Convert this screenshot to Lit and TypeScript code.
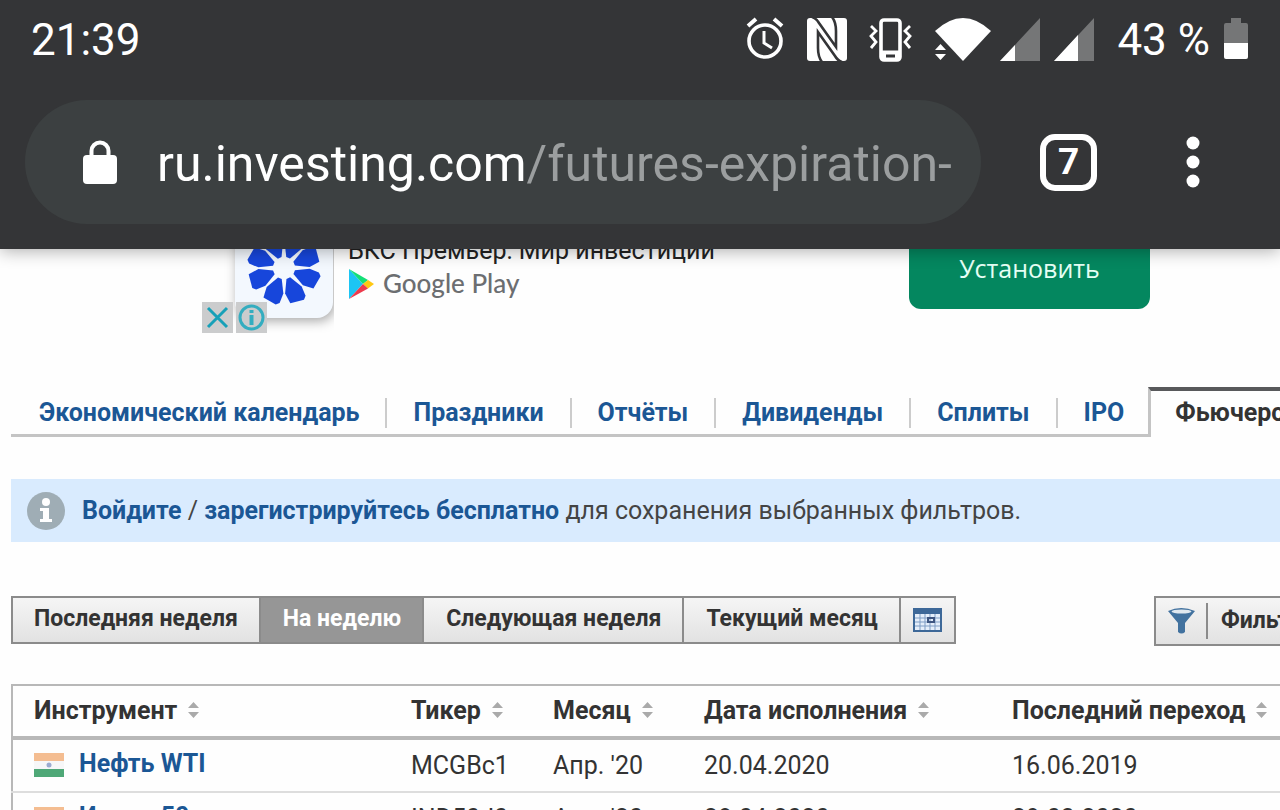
import { LitElement, html, css, svg } from "lit";
import { customElement } from "lit/decorators.js";

const tabs = ["Экономический календарь", "Праздники", "Отчёты", "Дивиденды", "Сплиты", "IPO"];
const columns = ["Инструмент", "Тикер", "Месяц", "Дата исполнения", "Последний переход"];
const rows = [
  ["Нефть WTI", "MCGBc1", "Апр. '20", "20.04.2020", "16.06.2019"],
  ["Индия 50", "IND50J0", "Апр. '20", "28.04.2020", "29.03.2020"],
];
const petals = [22, 67, 112, 157, 202, 247, 292, 337];

@customElement("app-root")
export class AppRoot extends LitElement {
  static styles = css`
    :host { display: block; height: 100vh; overflow: hidden; background: #fefefe; font-family: Roboto, sans-serif; color: #333; }
    * { box-sizing: border-box; }
    svg { display: block; flex: none; }
    a { color: #1b5795; text-decoration: none; font-weight: 700; }
    button { font: inherit; color: inherit; border: 0; margin: 0; padding: 0; background: none; cursor: pointer; }
    .chrome { position: relative; z-index: 1; height: 249px; background: #343537; color: #fff; box-shadow: 0 2px 16px rgba(0, 0, 0, 0.32); }
    .status { display: flex; align-items: center; height: 80px; padding: 0 32px 0 31px; font-size: 44px; }
    .time { flex: 1; }
    .indicators { display: flex; align-items: center; gap: 14px; }
    .percent { padding-left: 8px; }
    .toolbar { display: flex; align-items: center; height: 124px; margin-top: 20px; padding: 0 75px 0 25px; }
    .address { display: flex; align-items: center; flex: 1; height: 124px; border-radius: 62px; background: #3c4041; padding: 0 24px 0 58px; gap: 40px; min-width: 0; }
    .url { font-size: 50px; white-space: nowrap; overflow: hidden; flex: 1; line-height: 64px; padding-top: 4px; }
    .path { color: #9b9e9f; }
    .count { display: grid; place-items: center; width: 57px; height: 57px; margin-left: 59px; border: 6px solid #fff; border-radius: 15px; font-size: 37px; font-weight: 700; line-height: 40px; }
    .more { margin-left: 84px; }
    .ad { display: flex; align-items: flex-start; height: 84px; padding: 0 130px 0 202px; }
    .brand { position: relative; width: 132px; height: 84px; overflow: hidden; }
    .tile { margin: -30px 0 0 33px; width: 98px; height: 99px; border-radius: 16px; background: #f3f8fe; box-shadow: 2px 3px 12px rgba(0, 0, 0, 0.35); }
    .choices { position: absolute; left: 0; bottom: 0; display: flex; gap: 3px; }
    .choices button { width: 31px; height: 31px; background: #cbcccd; }
    .about { flex: 1; margin: -15px 0 0 14px; font-size: 25px; line-height: 33px; }
    .title { color: #222; }
    .store { display: flex; align-items: center; gap: 9px; color: #6c6e71; font-family: Lato, sans-serif; font-size: 26px; font-weight: 500; }
    .install { width: 241px; height: 79px; margin-top: -19px; padding-bottom: 3px; border-radius: 12px; background: #04875f; color: #e6fff5; font-family: "Open Sans", sans-serif; font-size: 25px; }
    .tabs { display: flex; margin-left: 11px; padding-top: 54px; font-size: 25px; white-space: nowrap; overflow: hidden; }
    .tab { display: flex; align-items: center; height: 50px; border-bottom: 3px solid #c4c4c4; padding: 4px 0 0 26px; }
    .tab:first-of-type { padding-left: 28px; }
    .tab a { padding-right: 26px; line-height: 30px; border-right: 2px solid #ccc; }
    .tab:last-of-type a { border: 0; padding-right: 24px; }
    .active { height: 50px; padding-left: 24px; border-left: 3px solid #c4c4c4; border-top: 4px solid #58595b; flex: 1; line-height: 44px; font-weight: 700; }
    .notice { display: flex; align-items: center; gap: 17px; height: 63px; margin: 42px 0 0 11px; padding-left: 16px; background: #d9ebfe; font-size: 25px; white-space: nowrap; color: #444; }
    .tools { display: flex; justify-content: space-between; align-items: flex-start; margin: 54px 0 0 11px; font-size: 23px; font-weight: 700; white-space: nowrap; overflow: hidden; }
    .range { display: flex; border: 2px solid #8b8b8b; background: linear-gradient(#f5f5f5, #e2e2e2); }
    .range button { height: 44px; padding: 0 21px 4px 22px; border-left: 2px solid #8b8b8b; }
    .range button:first-child { border-left: 0; padding-left: 21px; }
    .range .selected { background: #969696; color: #fff; }
    .range .calendar { padding: 0 12px; }
    .filters { display: flex; align-items: center; height: 50px; margin-right: -53px; border: 2px solid #8b8b8b; background: linear-gradient(#f5f5f5, #e2e2e2); padding: 0 10px 0 12px; gap: 11px; }
    .label { border-left: 2px solid #8b8b8b; padding-left: 13px; line-height: 36px; }
    .data { width: calc(100% - 11px); margin: 38px 0 0 11px; border-collapse: collapse; font-size: 25px; white-space: nowrap; table-layout: fixed; border: 2px solid #b8b8b8; border-right: 0; }
    .data th { text-align: left; height: 53px; padding: 0 0 2px; border-bottom: 4px solid #b8b8b8; }
    .data td { height: 54px; padding: 0 0 1px; border-bottom: 2px solid #ddd; }
    .data th:first-child, .data td:first-child { padding-left: 21px; }
    .head, .name { display: flex; align-items: center; gap: 11px; }
    .name { gap: 15px; }
    .name a { padding-bottom: 4px; }
    .c0 { width: 399px; } .c1 { width: 142px; } .c2 { width: 151px; } .c3 { width: 308px; }
  `;

  statusIcons() {
    return svg`<svg width="352" height="46" viewBox="743 18 352 46" fill="none" stroke="#fff" stroke-width="3.6">
      <circle cx="765" cy="42" r="16"/><path d="M764 32v12l8 5" stroke-width="3"/><path d="M748 27l8-7M782 27l-8-7" stroke-width="4"/>
      <rect x="807" y="19" width="40" height="43" rx="3" fill="#fff" stroke="none"/>
      <path d="M812 18q4 1 7 6l17 24V32q0-9-4-14M842 63q-4-1-7-6l-17-24v16q0 9 4 14" stroke="#343537" stroke-width="2.600"/>
      <rect x="881" y="21" width="19" height="40" rx="3"/><path d="M881 56h19" stroke-width="9"/><path d="M886 57h9" stroke="#343537" stroke-width="3"/>
      <path d="M871 27l5 5-5 5 5 6-5 6M910 27l-5 5 5 5-5 6 5 6" stroke-width="2.800"/>
      <path d="M935 32q28-26 56 0l-28 30z" fill="#fff" stroke="none"/>
      <path d="M935 51l5.500-6 5.500 6zM935 55l5.500 6 5.500-6z" fill="#fff" stroke="none"/>
      <path d="M1000 62l40-43v43zM1054 62l40-43v43z" fill="#757677" stroke="none"/>
      <path d="M1000 62l15-16v16zM1054 62l24-26v26z" fill="#fff" stroke="none"/>
    </svg>`;
  }

  sorter() {
    return svg`<svg width="11" height="18" viewBox="0 0 11 18" fill="#aaa"><path d="M0 7l5.500-6 5.500 6zM0 11h11l-5.500 6z"/></svg>`;
  }

  flag() {
    return svg`<svg width="30" height="24" viewBox="0 0 30 24"><path fill="#f4bd91" d="M0 0h30v8H0z"/><path fill="#f7f7f8" d="M0 8h30v8H0z"/><path fill="#4fa877" d="M0 16h30v8H0z"/><circle cx="15" cy="12" r="2.500" fill="#9cabd0"/></svg>`;
  }

  render() {
    return html`
      <header class="chrome">
        <div class="status">
          <span class="time">21:39</span>
          <div class="indicators">
            ${this.statusIcons()}
            <span class="percent">43 %</span>
            <svg width="24" height="44" viewBox="0 0 24 44"><path fill="#757677" d="M7 0h10v5h5q2 0 2 2v20H0V7q0-2 2-2h5z"/><path fill="#fff" d="M0 25h24v14q0 2-2 2H2q-2 0-2-2z"/></svg>
          </div>
        </div>
        <div class="toolbar">
          <div class="address">
            <svg width="34" height="45" viewBox="0 0 34 45"><rect y="15" width="34" height="29" rx="4" fill="#fff"/><path d="M8.500 18v-7a8.500 8.500 0 0 1 17 0v7" fill="none" stroke="#fff" stroke-width="4"/></svg>
            <div class="url">ru.investing.com<span class="path">/futures-expiration-</span></div>
          </div>
          <button class="count">7</button>
          <button class="more" aria-label="Меню"><svg width="24" height="54" viewBox="0 0 24 54" fill="#fff"><circle cx="12" cy="8" r="6.500"/><circle cx="12" cy="27" r="6.500"/><circle cx="12" cy="46" r="6.500"/></svg></button>
        </div>
      </header>
      <section class="ad">
        <div class="brand">
          <div class="tile"><svg width="98" height="99" viewBox="0 0 98 99"><g fill="#1746db">${petals.map(
            (a) => svg`<path transform="translate(49 49) rotate(${a})" d="M-2-11L-9-24L-9-34L-6-37L8-35L9-24L2-11z"/>`
          )}</g></svg></div>
          <div class="choices">
            <button aria-label="Закрыть"><svg width="31" height="31" viewBox="0 0 31 31"><path d="M6 6l19 19M25 6L6 25" stroke="#17a0b8" stroke-width="3"/></svg></button>
            <button aria-label="Сведения"><svg width="31" height="31" viewBox="0 0 31 31" fill="none" stroke="#34adc0" stroke-width="3"><circle cx="15.500" cy="15.500" r="11.500"/><path d="M15.500 13v10M15.500 8v3" stroke-width="4"/></svg></button>
          </div>
        </div>
        <div class="about">
          <div class="title">БКС Премьер: Мир инвестиций</div>
          <div class="store"><svg width="26" height="30" viewBox="0 0 26 30"><path fill="#1cc5f4" d="M1 0v30l14-15z"/><path fill="#13df77" d="M1 0l19 11-5 4z"/><path fill="#ffc813" d="M20 11l6 4-6 4.500-5-4.500z"/><path fill="#ed3b4d" d="M1 30l14-15 5 4.500z"/></svg>Google Play</div>
        </div>
        <button class="install">Установить</button>
      </section>
      <nav class="tabs">
        ${tabs.map((t) => html`<div class="tab"><a href="#">${t}</a></div>`)}
        <span class="active">Фьючерсы</span>
      </nav>
      <div class="notice">
        <svg width="38" height="38" viewBox="0 0 38 38"><circle cx="19" cy="19" r="19" fill="#9fadb5"/><circle cx="19" cy="10" r="4" fill="#fff"/><path fill="#fff" d="M13 16h9v11h3v3H13v-3h3v-8h-3z"/></svg>
        <span><a href="#">Войдите</a> / <a href="#">зарегистрируйтесь бесплатно</a> для сохранения выбранных фильтров.</span>
      </div>
      <div class="tools">
        <div class="range">
          <button>Последняя неделя</button><button class="selected">На неделю</button><button>Следующая неделя</button><button>Текущий месяц</button>
          <button class="calendar" aria-label="Календарь"><svg width="29" height="24" viewBox="0 0 29 24"><path fill="#3d6898" d="M0 0h29v24H0z"/><path fill="#e4eefa" d="M2 6h25v16H2z"/><path stroke="#7e9dc4" d="M7 6v16M12 6v16M17 6v16M22 6v16M2 10h25M2 14h25M2 18h25"/><path fill="none" stroke="#3d5580" stroke-width="2" d="M15 10h6v4h-6z"/></svg></button>
        </div>
        <button class="filters">
          <svg width="27" height="26" viewBox="0 0 27 26"><path fill="#42729f" d="M0 3q13-6 27 0l-10 12v9q-3.500 3-7 0v-9z"/><ellipse cx="13.500" cy="3.500" rx="10" ry="2" fill="#e0e8ef"/></svg>
          <span class="label">Фильтры</span>
        </button>
      </div>
      <table class="data">
        <colgroup><col class="c0" /><col class="c1" /><col class="c2" /><col class="c3" /><col /></colgroup>
        <thead><tr>${columns.map((c) => html`<th><span class="head">${c}${this.sorter()}</span></th>`)}</tr></thead>
        <tbody>${rows.map(
          (r) => html`<tr>${r.map((c, i) => (i ? html`<td>${c}</td>` : html`<td><span class="name">${this.flag()}<a href="#">${c}</a></span></td>`))}</tr>`
        )}</tbody>
      </table>
    `;
  }
}
